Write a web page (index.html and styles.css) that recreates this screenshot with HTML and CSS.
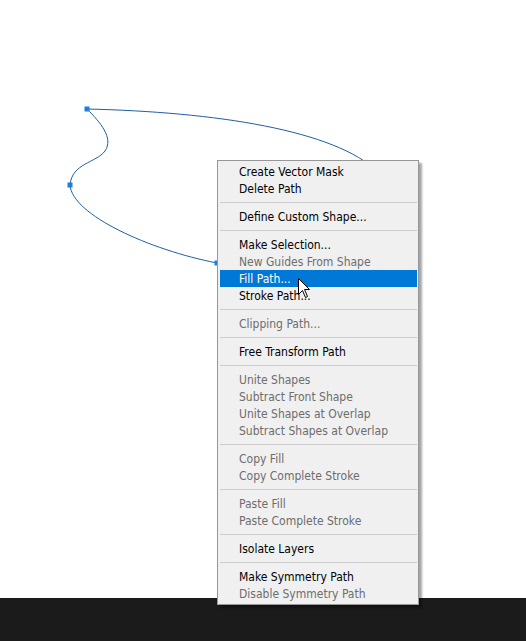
FILE: index.html
```html
<!DOCTYPE html>
<html>
<head>
<meta charset="utf-8">
<link rel="stylesheet" href="styles.css">
</head>
<body>
<div class="screen">
  <div class="canvas">
    <svg class="path" width="526" height="598" viewBox="0 0 526 598">
      <path d="M87,109 C215,112 335,130 378,172" fill="none" stroke="#1d5fa3" stroke-width="1"/>
      <path d="M87,109 C100,122 114,138 105,151 C96,163 72,163 70,185 C72,215 150,250 217,263" fill="none" stroke="#1d5fa3" stroke-width="1"/>
      <rect x="84.5" y="106.5" width="5" height="5" fill="#1e7fdc"/>
      <rect x="67.5" y="182.5" width="5" height="5" fill="#1e7fdc"/>
      <rect x="214.5" y="260.5" width="5" height="5" fill="#1e7fdc"/>
    </svg>
    <div class="menu">
      <div class="item">Create Vector Mask</div>
      <div class="item">Delete Path</div>
      <div class="sep"></div>
      <div class="item">Define Custom Shape...</div>
      <div class="sep"></div>
      <div class="item">Make Selection...</div>
      <div class="item off">New Guides From Shape</div>
      <div class="item hot">Fill Path...</div>
      <div class="item">Stroke Path...</div>
      <div class="sep"></div>
      <div class="item off">Clipping Path...</div>
      <div class="sep"></div>
      <div class="item">Free Transform Path</div>
      <div class="sep"></div>
      <div class="item off">Unite Shapes</div>
      <div class="item off">Subtract Front Shape</div>
      <div class="item off">Unite Shapes at Overlap</div>
      <div class="item off">Subtract Shapes at Overlap</div>
      <div class="sep"></div>
      <div class="item off">Copy Fill</div>
      <div class="item off">Copy Complete Stroke</div>
      <div class="sep"></div>
      <div class="item off">Paste Fill</div>
      <div class="item off">Paste Complete Stroke</div>
      <div class="sep"></div>
      <div class="item">Isolate Layers</div>
      <div class="sep"></div>
      <div class="item">Make Symmetry Path</div>
      <div class="item off">Disable Symmetry Path</div>
    </div>
    <svg class="cursor" width="13" height="21" viewBox="0 0 13 21">
      <path d="M0.5,0.5 L0.5,16.5 L4.5,12.5 L7.5,19.5 L9.5,18.5 L6.5,11.5 L11.5,11.5 Z" fill="#fff" stroke="#000" stroke-width="1" stroke-linejoin="miter"/>
    </svg>
  </div>
  <div class="bar"></div>
</div>
</body>
</html>
```
FILE: styles.css
```css
html, body {
  margin: 0;
  padding: 0;
  background: #ffffff;
}
.screen {
  width: 526px;
  height: 641px;
  display: flex;
  flex-direction: column;
  overflow: hidden;
}
.canvas {
  position: relative;
  height: 598px;
  background: #ffffff;
  flex: none;
}
.path {
  position: absolute;
  left: 0;
  top: 0;
}
.bar {
  flex: 1;
  background: #1b1b1b;
}
.menu {
  position: absolute;
  left: 217px;
  top: 160px;
  width: 197px;
  padding: 2px 1px 2px 2px;
  background: #f0f0f0;
  border: 1px solid #979797;
  box-shadow: 3px 3px 2px rgba(0, 0, 0, 0.35);
  z-index: 2;
  font-family: "DejaVu Sans Condensed", "DejaVu Sans", sans-serif;
  font-size: 12px;
  color: #000000;
}
.item {
  height: 17px;
  line-height: 18px;
  padding-left: 19px;
  white-space: nowrap;
}
.item.off {
  color: #6d6d6d;
}
.item.hot {
  background: #0078d7;
  color: #ffffff;
}
.sep {
  height: 11px;
  display: flex;
  align-items: center;
}
.sep::before {
  content: "";
  flex: 1;
  height: 1px;
  background: #cccccc;
}
.cursor {
  position: absolute;
  left: 298px;
  top: 278px;
  z-index: 3;
}
```
